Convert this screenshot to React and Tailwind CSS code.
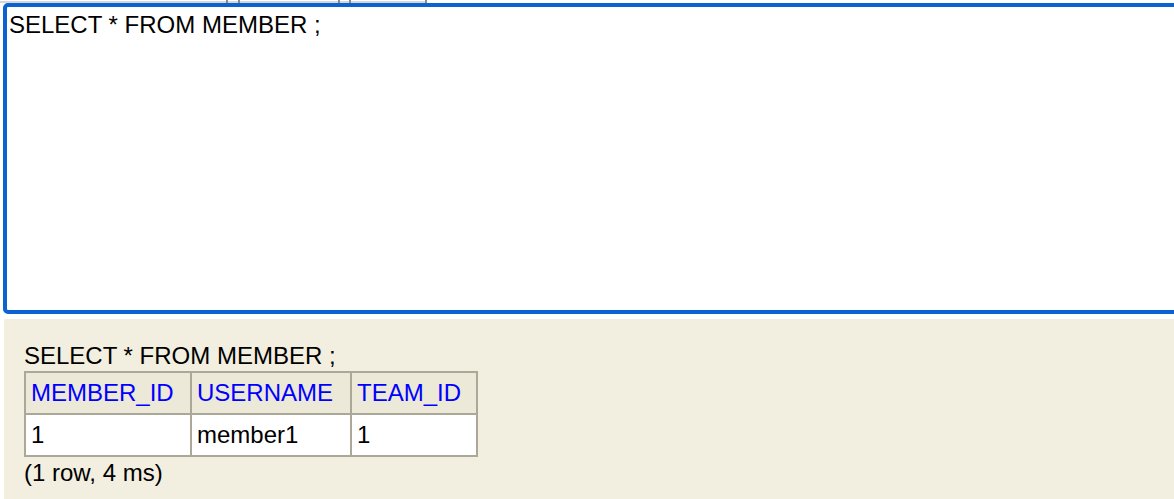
const columns = ['MEMBER_ID', 'USERNAME', 'TEAM_ID'];
const rows = [['1', 'member1', '1']];

export default function App() {
  return (
    <div className="w-[1174px] h-[499px] overflow-hidden bg-white text-black font-['Liberation_Sans',Arial,sans-serif]">
      {/* toolbar buttons, cut off at the top */}
      <div className="flex h-[3px] items-end">
        <div className="w-[226px] h-[2px] bg-[#d6d6d6]" />
        <div className="w-[2px] h-[3px] bg-[#8a8a8a]" />
        <div className="w-[10px] h-[2px] bg-[#d6d6d6]" />
        <div className="w-[2px] h-[3px] bg-[#8a8a8a]" />
        <div className="w-[98px] h-[2px] bg-[#d6d6d6]" />
        <div className="w-[2px] h-[3px] bg-[#8a8a8a]" />
        <div className="w-[9px] h-[2px] bg-[#d6d6d6]" />
        <div className="w-[2px] h-[3px] bg-[#8a8a8a]" />
        <div className="w-[74px] h-[2px] bg-[#d6d6d6]" />
        <div className="w-[2px] h-[3px] bg-[#8a8a8a]" />
      </div>

      <div className="ml-[3px] w-[1200px] h-[311px] border-4 border-[#0b62d0] rounded-l-[5px] bg-white pl-[2px] pt-[4px] text-[24px] leading-[1.15]">
        SELECT * FROM MEMBER ;
      </div>

      <div className="ml-[4px] mt-[5px] h-[180px] bg-[#f2efe0] pl-[20px] pt-[23px] text-[24px] leading-[1.15]">
        <div>SELECT * FROM MEMBER ;</div>
        <div className="mt-[1px] inline-grid grid-cols-[164px_158px_124px] gap-[2px] bg-[#aca899] p-[2px]">
          {columns.map((c) => (
            <div key={c} className="h-[40px] bg-[#ece9d8] pl-[5px] flex items-center text-[#0000ff]">
              {c}
            </div>
          ))}
          {rows.map((r, i) =>
            r.map((v, j) => (
              <div key={i + '-' + j} className="h-[40px] bg-white pl-[5px] flex items-center">
                {v}
              </div>
            ))
          )}
        </div>
        <div className="mt-[2px]">(1 row, 4 ms)</div>
      </div>
    </div>
  );
}
